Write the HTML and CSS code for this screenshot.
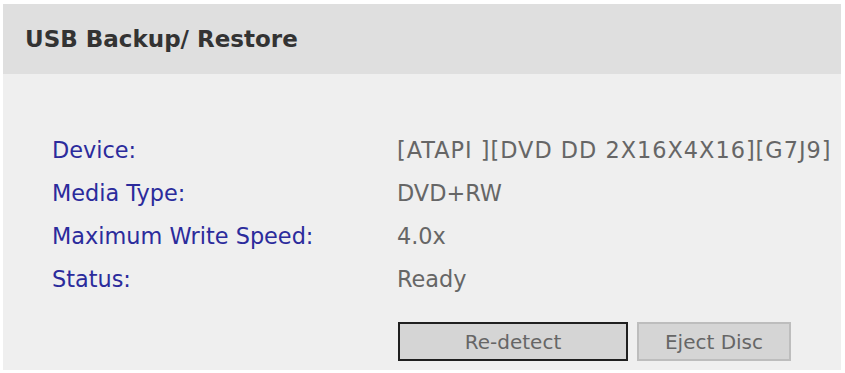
FILE: index.html
```html
<!DOCTYPE html>
<html>
<head>
<meta charset="utf-8">
<link rel="stylesheet" href="styles.css">
</head>
<body>
<div class="panel">
  <div class="panel-head">USB Backup/ Restore</div>
  <div class="panel-body">
    <div class="row"><span class="label">Device:</span><span class="value value-wide">[ATAPI ][DVD DD 2X16X4X16][G7J9]</span></div>
    <div class="row"><span class="label">Media Type:</span><span class="value">DVD+RW</span></div>
    <div class="row"><span class="label">Maximum Write Speed:</span><span class="value">4.0x</span></div>
    <div class="row"><span class="label">Status:</span><span class="value">Ready</span></div>
    <div class="actions">
      <button class="btn btn-primary">Re-detect</button>
      <button class="btn btn-plain">Eject Disc</button>
    </div>
  </div>
</div>
</body>
</html>
```
FILE: styles.css
```css
html, body {
  margin: 0;
  padding: 0;
  background: #ffffff;
}
body {
  padding: 4px 4px 3px 3px;
  font-family: "DejaVu Sans", Verdana, sans-serif;
}
.panel {
  background: #efefef;
  height: 366px;
  box-sizing: border-box;
}
.panel-head {
  background: #dfdfdf;
  height: 70px;
  box-sizing: border-box;
  padding: 0 0 0 22px;
  display: flex;
  align-items: center;
  font-weight: bold;
  font-size: 23px;
  color: #333333;
}
.panel-body {
  padding: 54px 0 0 49px;
}
.row {
  display: flex;
  height: 43px;
  align-items: center;
  font-size: 22.4px;
  line-height: 26px;
}
.label {
  width: 345px;
  color: #2b2b9c;
}
.value {
  color: #666666;
}
.value-wide {
  letter-spacing: 1px;
}
.actions {
  display: flex;
  gap: 9px;
  padding-left: 346px;
  margin-top: 22px;
}
.btn {
  font-family: "DejaVu Sans", Verdana, sans-serif;
  font-size: 20px;
  color: #666666;
  background: #d5d5d5;
  height: 39px;
  box-sizing: border-box;
  padding: 0;
  margin: 0;
}
.btn-primary {
  width: 230px;
  border: 2px solid #1f1f1f;
}
.btn-plain {
  width: 154px;
  border: 2px solid #bdbdbd;
}
```
